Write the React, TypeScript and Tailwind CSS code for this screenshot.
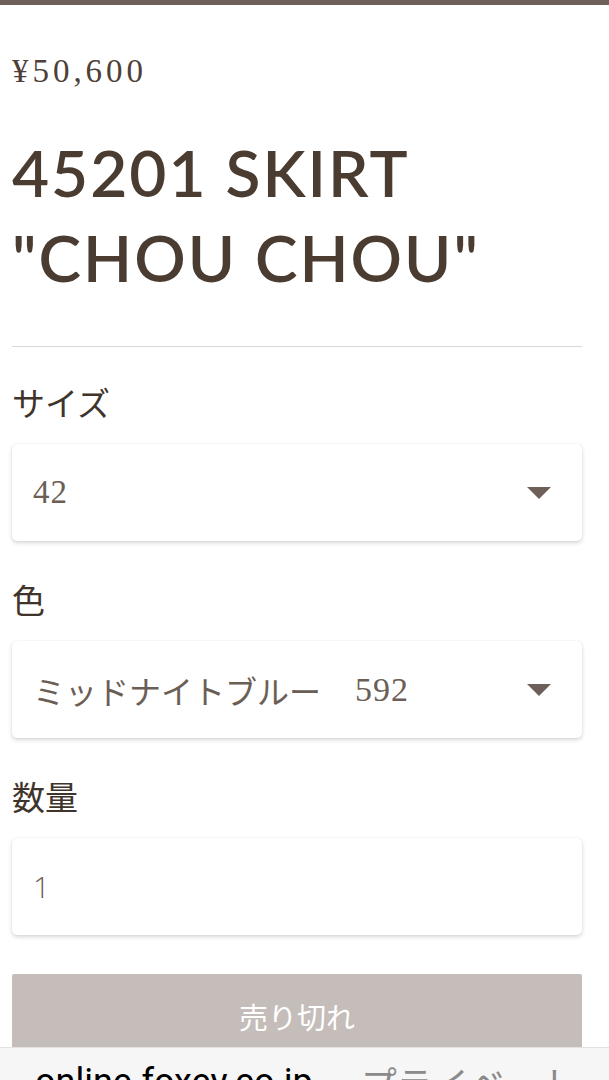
import React from 'react'

const serif = "font-['Liberation_Serif','Noto_Serif_CJK_JP',serif]"
const jp = "font-['Noto_Sans_CJK_JP',sans-serif]"

function Caret() {
  return (
    <svg width="24" height="12" viewBox="0 0 24 12" className="shrink-0">
      <path d="M0 0 H24 L12 12 Z" fill="#6e6058" />
    </svg>
  )
}

function Field({ label, children, caret = true }: { label: string; children: React.ReactNode; caret?: boolean }) {
  return (
    <div>
      <div className={`${jp} text-[33px] leading-[40px] text-[#3f342c]`}>{label}</div>
      <div className="mt-[22px] h-[97px] rounded-[5px] bg-white shadow-[0_2px_4px_rgba(0,0,0,0.16),0_0_1px_rgba(0,0,0,0.12)] flex items-center pl-[21px] pr-[31px]">
        <div className="flex-1 flex items-center text-[#6b5e55]">{children}</div>
        {caret && <Caret />}
      </div>
    </div>
  )
}

export default function App() {
  return (
    <div className="min-h-[1080px] bg-white relative overflow-hidden">
      <div className="h-[5px] bg-[#6e6159]" />
      <div className="pl-3 pr-[27px]">
        <div className={`${serif} mt-[47px] h-[40px] flex items-center text-[33px] tracking-[0.12em] text-[#4e4037]`}>
          ¥50,600
        </div>
        <h1 className="mt-[38px] font-['Lato',sans-serif] font-semibold text-[64px] leading-[85px] tracking-[2px] text-[#4a3c30]">
          45201 SKIRT
          <br />
          "CHOU CHOU"
        </h1>
        <div className="mt-[46px] h-px bg-[#dcd8d6]" />
        <div className="mt-[35px] flex flex-col gap-[38px]">
          <Field label="サイズ">
            <span className={`${serif} text-[33px] tracking-[1px]`}>42</span>
          </Field>
          <Field label="色">
            <span className={`${jp} text-[32px]`}>ミッドナイトブルー</span>
            <span className={`${serif} text-[34px] tracking-[1px] ml-[34px]`}>592</span>
          </Field>
          <Field label="数量" caret={false}>
            <span className="font-['Open_Sans',sans-serif] font-light text-[30px]">1</span>
          </Field>
        </div>
        <button className={`${jp} mt-[39px] w-full h-[86px] bg-[#c5bdb9] rounded-[2px] text-white text-[29px] flex items-center justify-center`}>
          売り切れ
        </button>
      </div>
      <div className="fixed left-0 right-0 top-[1047px] h-[33px] bg-[#f7f6f6] border-t border-[#e4e2e1] overflow-hidden flex items-start pl-[35px] pt-[16px]">
        <span className="font-['Roboto',sans-serif] text-[36px] leading-none text-black">online.foxey.co.jp</span>
        <span className={`${jp} text-[36px] leading-none text-[#8a8a8a] ml-[48px]`}>プライベート</span>
      </div>
    </div>
  )
}
